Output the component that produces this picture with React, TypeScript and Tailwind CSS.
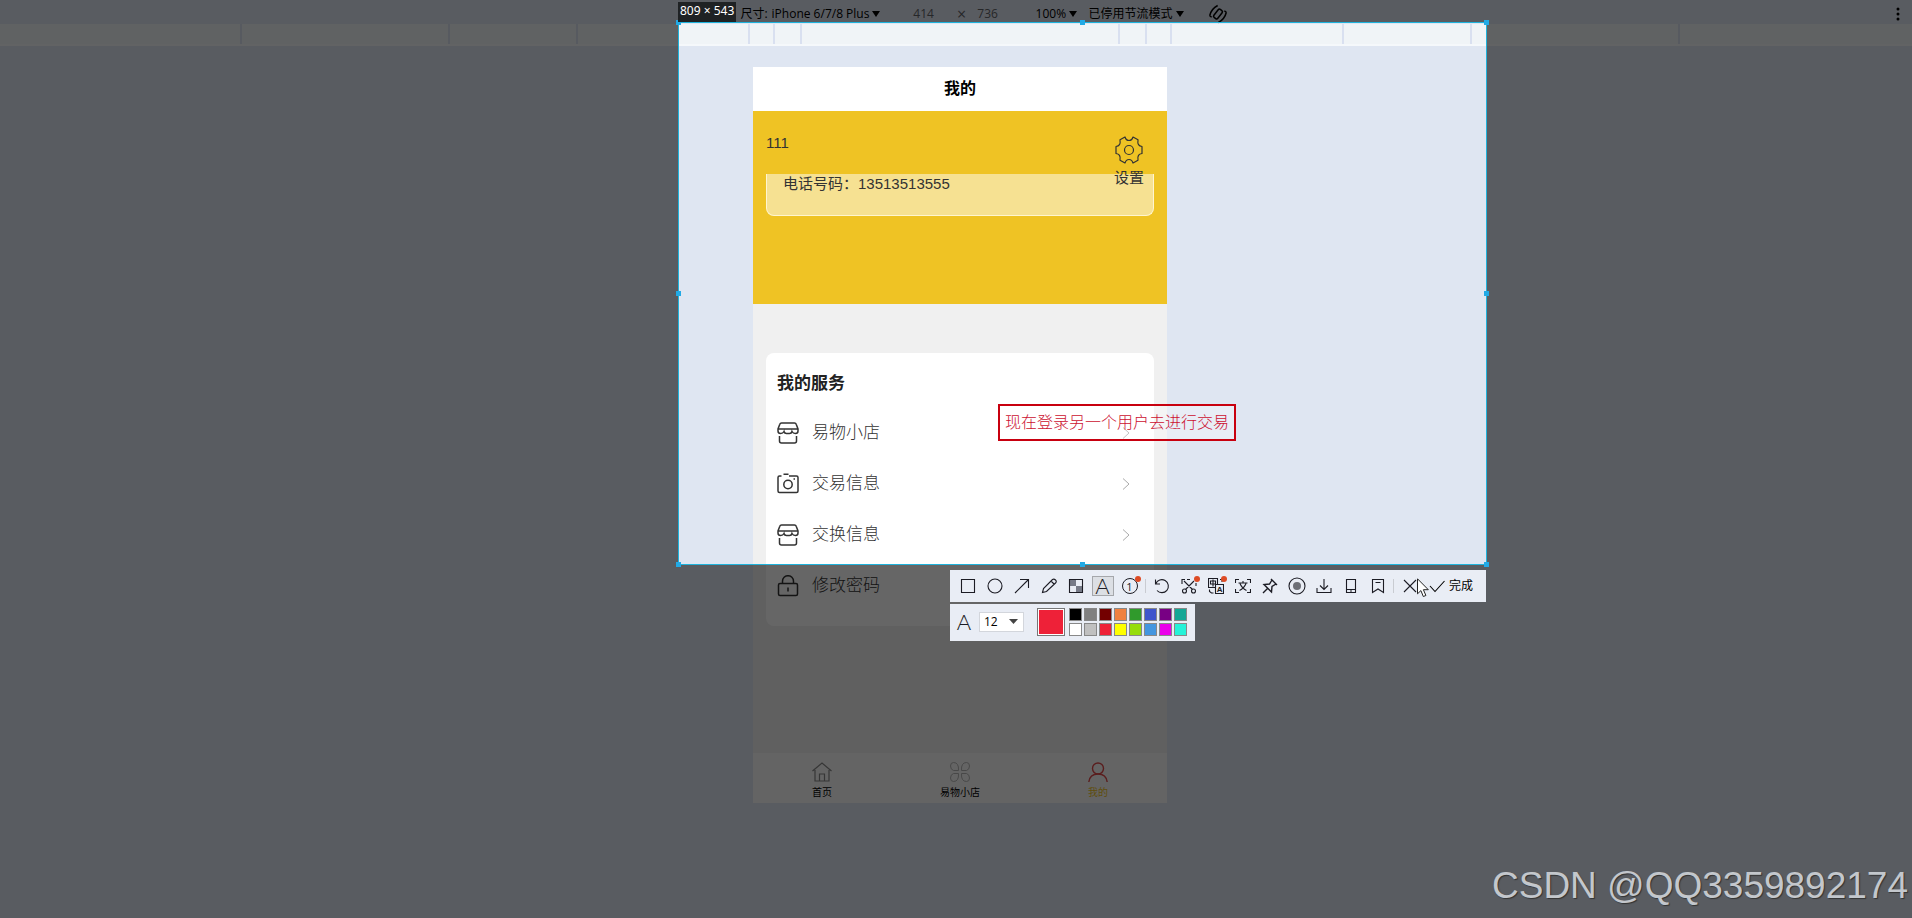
import type { ReactNode } from "react";

const swatches = [
  "bg-black", "bg-[#808080]", "bg-[#730000]", "bg-[#ef8140]", "bg-[#309a2c]", "bg-[#3f55cc]", "bg-[#780084]", "bg-[#15a795]",
  "bg-white", "bg-[#c0c0c0]", "bg-[#ee2138]", "bg-[#ffff00]", "bg-[#96dc0c]", "bg-[#4496df]", "bg-[#ea00ea]", "bg-[#26f2d8]",
];

const rulerLeft = ["w-[208px]", "w-[128px]", "w-[172px]", "w-[25px]", "w-[27px]"];
const rulerRight = ["w-[27px]", "w-[25px]", "w-[172px]", "w-[128px]", "w-[208px]"];

const Svg = ({ size = "size-4", box = "0 0 16 16", stroke = 1.1, children }: { size?: string; box?: string; stroke?: number; children: ReactNode }) => (
  <svg className={`${size} shrink-0`} viewBox={box} fill="none" stroke="currentColor" strokeWidth={stroke} aria-hidden="true">
    {children}
  </svg>
);

const ShopIcon = () => (
  <Svg size="size-[22px]" box="0 0 22 22" stroke={1.5}>
    <path d="M4.500 1h13q1.300 0 1.700 1.200L21 7v2q0 2.500-2.500 2.500T15 9.500q-.5 2-2.500 2h-3Q7.500 11.500 7 9.500q-1 2-3.500 2T1 9V7l1.800-4.800Q3.200 1 4.500 1ZM1 7h20M2.500 14v5q0 2 2 2h13q2 0 2-2v-5" />
  </Svg>
);

const CameraIcon = () => (
  <Svg size="size-[22px]" box="0 0 22 22" stroke={1.5}>
    <path d="M4.500 3H2.500Q1 3 1 4.500V18q0 1.500 1.500 1.500h17q1.500 0 1.500-1.500V4.500Q21 3 19.500 3H12M6.500 1.300h5M16.500 6H18" />
    <circle cx="11" cy="11.500" r="4.200" />
  </Svg>
);

const LockIcon = () => (
  <Svg size="size-[22px]" box="0 0 22 22" stroke={1.5}>
    <rect x="1.500" y="8.500" width="19" height="12" rx="1.500" />
    <path d="M5.500 8.500V6.200a5.500 5.500 0 0 1 11 0v2.300M11 12.500v4" />
  </Svg>
);

const services = [
  { name: "易物小店", icon: <ShopIcon /> },
  { name: "交易信息", icon: <CameraIcon /> },
  { name: "交换信息", icon: <ShopIcon /> },
  { name: "修改密码", icon: <LockIcon /> },
];

const Arrow = () => (
  <svg className="ml-0.5 h-1.5 w-2" viewBox="0 0 8 6" aria-hidden="true">
    <path d="M0 0h8L4 6z" fill="currentColor" />
  </svg>
);

const Ruler = () => (
  <div className="flex h-[22px] border-b-2 border-[#f5f8fb] bg-[#f0f4f7] pl-2">
    <div className="flex-1" />
    {rulerLeft.map((w, i) => (
      <div key={i} className={`${w} shrink-0 border-l-2 border-[#d9e0f0]`} />
    ))}
    <div className="w-[320px] shrink-0 border-x-2 border-[#d9e0f0]" />
    {rulerRight.map((w, i) => (
      <div key={i} className={`${w} shrink-0 border-r-2 border-[#d9e0f0]`} />
    ))}
    <div className="flex-1" />
  </div>
);

const DeviceBar = () => (
  <header className="flex h-6 items-center pt-[3px] font-['Open_Sans','Noto_Sans_CJK_SC',sans-serif] text-xs text-black">
    <div className="w-9 shrink-0" />
    <div className="flex flex-1 items-center justify-center pl-14">
      <label htmlFor="device">尺寸:</label>
      <select id="device" className="ml-1 appearance-none">
        <option>iPhone 6/7/8 Plus</option>
      </select>
      <Arrow />
      <input aria-label="宽度" defaultValue="414" className="ml-5 w-12 text-center text-[#5f6368]" />
      <span className="w-7 text-center text-base leading-4 text-[#5f6368]">×</span>
      <input aria-label="高度" defaultValue="736" className="w-6 text-center text-[#5f6368]" />
      <select aria-label="缩放" className="ml-9 appearance-none">
        <option>100%</option>
      </select>
      <Arrow />
      <select aria-label="节流" className="ml-3 appearance-none">
        <option>已停用节流模式</option>
      </select>
      <Arrow />
      <button aria-label="旋转" className="ml-6">
        <Svg size="size-5" box="0 0 20 20" stroke={1.5}>
          <g transform="rotate(38 10 10)">
            <rect x="7.500" y="5" width="5" height="10" rx="1.500" />
            <path d="M4.500 3.500q-3 6.500 0 13M15.500 3.500q3 6.500 0 13M4.500 16.500h2.500M13 3.500h2.500" />
          </g>
        </Svg>
      </button>
    </div>
    <button aria-label="更多选项" className="flex w-9 shrink-0 justify-center pl-2">
      <svg className="h-4 w-1" viewBox="0 0 4 16" aria-hidden="true">
        <circle cx="2" cy="3" r="1.500" />
        <circle cx="2" cy="8" r="1.500" />
        <circle cx="2" cy="13" r="1.500" />
      </svg>
    </button>
  </header>
);

const Phone = () => (
  <div className="flex h-[736px] flex-col bg-[#f0f0f0] text-[#333]">
    <h1 className="flex h-11 shrink-0 items-center justify-center bg-white text-base font-bold text-black">我的</h1>
    <section className="flex h-[193px] shrink-0 flex-col bg-[#efc324] px-[13px] pt-5 text-[15px] leading-6">
      <div className="relative flex h-[43px] items-start justify-between">
        <span>111</span>
        <button className="mr-[10px] mt-[5px] flex flex-col items-center gap-0.5">
          <Svg size="size-7" box="0 0 28 28" stroke={1.2}>
            <path d="M10 1q1 3.500 4 3.500T18 1l5 2.800q-1 6.200 4 6.700v7q-5 .5-4 6.700L18 27q-1-3.500-4-3.500T10 27l-5-2.800q1-6.200-4-6.700v-7q5-.5 4-6.700z" strokeLinejoin="round" />
            <circle cx="14" cy="14" r="4.500" />
          </Svg>
          <span>设置</span>
        </button>
      </div>
      <p className="h-[42px] rounded-b-lg border border-t-0 border-[#fff5cf] bg-[#f6e192] px-4 leading-5">电话号码：13513513555</p>
    </section>
    <section className="mx-[13px] mt-[49px] rounded-lg bg-white px-[11px] pt-[17px] pb-4">
      <h2 className="text-[17px] leading-7 font-bold text-[#222]">我的服务</h2>
      <ul className="pt-2">
        {services.map((item) => (
          <li key={item.name}>
            <a href="#" className="flex h-[51px] items-center pt-0.5 pr-[13px] text-[17px]">
              {item.icon}
              <span className="ml-[13px] flex-1 font-light text-[#333]">{item.name}</span>
              <svg className="h-3 w-2 text-[#aaa]" viewBox="0 0 8 12" fill="none" stroke="currentColor" aria-hidden="true">
                <path d="M1 .5 7 6 1 11.500" />
              </svg>
            </a>
          </li>
        ))}
      </ul>
    </section>
    <nav className="mt-auto flex h-[50px] shrink-0 bg-[#fafafa] pt-1 text-[10px] leading-3 text-black">
      <a href="#" className="flex flex-1 flex-col items-center justify-center gap-[5px]">
        <Svg size="size-5 text-[#888]" box="0 0 20 20" stroke={1.2}>
          <path d="M.5 9 10 1l9.500 8M3 8v11h14V8M7.500 19v-7h5v7" />
        </Svg>
        首页
      </a>
      <a href="#" className="flex flex-1 flex-col items-center justify-center gap-[5px]">
        <Svg size="size-5 text-[#b5b5b5]" box="0 0 20 20" stroke={1}>
          <path d="M8.500 8.500Q9 .5 3.500.5.500.5.500 4t3 4.500zM11.500 8.500Q11 .5 16.500.5q3 0 3 3.500t-3 4.500zM8.500 11.500q.5 8-5 8-3 0-3-3.500t3-4.500zM11.500 11.500q-.5 8 5 8 3 0 3-3.500t-3-4.500z" />
        </Svg>
        易物小店
      </a>
      <a href="#" className="flex flex-1 flex-col items-center justify-center gap-[5px] text-[#efc324]">
        <Svg size="size-5 text-[#e04a4a]" box="0 0 20 20" stroke={1.4}>
          <circle cx="10" cy="6.500" r="5.500" />
          <path d="M.8 20q1-8 9.200-8t9.200 8" />
        </Svg>
        我的
      </a>
    </nav>
  </div>
);

const Tool = ({ label, active, dot, children }: { label: string; active?: boolean; dot?: boolean; children: ReactNode }) => (
  <button aria-label={label} className="relative flex w-[27px] shrink-0 items-center justify-center">
    <span className={active ? "flex h-[20px] w-[22px] items-center justify-center border border-[#a5a7ab] bg-[#dcdfe4]" : "flex"}>{children}</span>
    {dot && <i className="absolute top-1.5 right-0.5 size-1.5 rounded-full bg-[#dd4b25]" />}
  </button>
);

const Divider = () => <span className="mx-0.5 h-3.5 w-px shrink-0 self-center bg-[#c9ccd2]" />;

const Toolbar = () => (
  <div className="absolute top-full right-0 mt-1.5 flex w-[536px] flex-col items-start gap-0.5 text-[#1c1c24]">
    <div className="flex h-8 w-full bg-[#e9edf5] pl-1">
      <Tool label="矩形"><Svg><path d="M1.500 1.500h13v13h-13z" /></Svg></Tool>
      <Tool label="椭圆"><Svg><circle cx="8" cy="8" r="7" /></Svg></Tool>
      <Tool label="箭头"><Svg><path d="M1 15 14.500 1.500M6 1.500h8.500V10" /></Svg></Tool>
      <Tool label="画笔"><Svg><path d="M1.500 14.500 2.500 10.500 11.500 1.500Q13 .5 14.500 2T14.500 5L5.500 13.500zM10 3l3 3" /></Svg></Tool>
      <Tool label="马赛克"><Svg><path d="M2 2h6v6H2zM8 8h6v6H8z" fill="#777b88" stroke="none" /><path d="M1.500 1.500h13v13h-13z" /></Svg></Tool>
      <Tool label="文字" active><span className="font-['Lato'] text-[22px] leading-5 font-light">A</span></Tool>
      <Tool label="序号" dot><span className="flex size-4 items-center justify-center rounded-full border border-current font-['Open_Sans'] text-[11px] leading-none">1</span></Tool>
      <Divider />
      <Tool label="撤销"><Svg><path d="M1.500 1.500V6H6M1.800 5.800A6.500 6.500 0 1 1 3 12.500" /></Svg></Tool>
      <Tool label="裁剪" dot><Svg><path d="M1 6V1.500h3M6 1.500h3M15 5v3M3 3l8.500 8.500M13 3l-8.500 8.500" /><circle cx="3.500" cy="13" r="2" /><circle cx="12.500" cy="13" r="2" /></Svg></Tool>
      <Tool label="翻译" dot>
        <Svg>
          <path d="M8 9.500H.5v-9h9V6M2.500 3h5v3h-5zM5 1.500v7M7.500 6.500h8v9h-8zM1.500 11.500v2l2 1.500h2M12 1.500h2v2.500" />
          <text x="8.800" y="14.200" fontSize="8" fontWeight="bold" fill="currentColor" stroke="none">A</text>
        </Svg>
      </Tool>
      <Tool label="识别文字"><Svg><path d="M.5 5V1.500H4M12 1.500h3.500V5M.5 11v3.500H4M12 14.500h3.500V11M3.500 5h9M8 3v2M5 5.500q2 5 6.500 7M11 5.500q-2 5-6.500 7" /></Svg></Tool>
      <Tool label="钉住"><Svg><path d="m9 1 6 6M10 2 7.500 6 2 6.500 9.500 14l.5-5.500L14 6M5.500 10.500 1 15" strokeWidth="1.400" /></Svg></Tool>
      <Tool label="录制"><Svg size="size-[18px]" box="0 0 18 18"><circle cx="9" cy="9" r="8" /><circle cx="9" cy="9" r="4" fill="#6d6f76" stroke="none" /></Svg></Tool>
      <Tool label="保存"><Svg><path d="M8 1v10M4 7.500l4 4 4-4M1 10v4.500h14V10" /></Svg></Tool>
      <Tool label="发送到手机"><Svg><path d="M3.500 1.500h9v13h-9zM3.500 11.500h9M7 13h2" /></Svg></Tool>
      <Tool label="收藏"><Svg><path d="M2.500 1.500h11v13L8 11l-5.500 3.500zM5.500 4.500h5" /></Svg></Tool>
      <Divider />
      <Tool label="取消"><Svg><path d="m2 2 12 12M14 2 2 14" /></Svg></Tool>
      <button className="flex flex-1 items-center gap-1 pl-1.5 text-xs text-black">
        <Svg><path d="m1 8 5 5.500L15.500 3" /></Svg>
        完成
      </button>
      <svg className="absolute top-2 right-[57px] h-5 w-3" viewBox="0 0 12 20" aria-hidden="true">
        <path d="M.5.800v15l3.400-3.200 2.400 5.900 2.600-1-2.500-5.800h4.900z" fill="#fff" stroke="#222" />
      </svg>
    </div>
    <div className="flex h-[37px] items-center bg-[#e9edf5] pr-2 pb-0.5 pl-[5px]">
      <span className="w-[18px] text-center font-['Lato'] text-[22px] leading-5 font-light">A</span>
      <div className="relative ml-1.5 flex items-center">
        <select aria-label="字号" className="h-5 w-[45px] appearance-none border border-[#d3d6dc] bg-white pl-1 font-['Open_Sans'] text-xs text-black">
          <option>12</option>
        </select>
        <span className="pointer-events-none absolute right-1.5 text-[#444]"><svg className="h-[5px] w-[9px]" viewBox="0 0 9 5" aria-hidden="true"><path d="M0 0h9L4.500 5z" fill="currentColor" /></svg></span>
      </div>
      <button aria-label="当前颜色" className="ml-[13px] size-7 border border-[#777] bg-white p-px">
        <span className="block size-full bg-[#ee2138]" />
      </button>
      <div className="ml-1 grid grid-cols-8 gap-0.5">
        {swatches.map((c) => (
          <button key={c} aria-label="颜色" className={`${c} size-[13px] border border-[#888]`} />
        ))}
      </div>
    </div>
  </div>
);

const handles = [
  "-top-[3px] -left-[3px]", "-top-[3px] left-1/2 -ml-[3px]", "-top-[3px] -right-[3px]",
  "top-1/2 -left-[3px] -mt-[3px]", "top-1/2 -right-[3px] -mt-[3px]",
  "-bottom-[3px] -left-[3px]", "-bottom-[3px] left-1/2 -ml-[3px]", "-bottom-[3px] -right-[3px]",
];

// the shadow dims everything outside of the selected area
const Selection = () => (
  <div className="absolute -top-[45px] -left-[75px] h-[543px] w-[809px] border border-[#1fb3dc] shadow-[0_0_0_2000px_rgba(0,0,0,0.6)]">
    {handles.map((h) => (
      <i key={h} className={`${h} absolute size-[5px] bg-[#22aae6]`} />
    ))}
    <div className="absolute bottom-full -left-px mb-px h-5 bg-[#1f2224] px-0.5 font-['Noto_Sans'] text-xs leading-[18px] whitespace-nowrap text-white">809 × 543</div>
    <p className="absolute top-[381px] left-[319px] border-2 border-[#c8000f] bg-white/30 px-[5px] pt-px text-base leading-8 font-light whitespace-nowrap text-[#cc1030]">现在登录另一个用户去进行交易</p>
    <Toolbar />
  </div>
);

const App = () => {
  return (
    <div className="relative min-h-screen overflow-hidden bg-[#dfe6f2] font-['Liberation_Sans','Noto_Sans_CJK_SC',sans-serif]">
      <DeviceBar />
      <Ruler />
      <main className="flex justify-center pt-[21px] pl-2">
        <div className="relative w-[414px] shrink-0">
          <Phone />
          <Selection />
        </div>
      </main>
      <div className="absolute right-1 bottom-2 font-['Liberation_Sans',sans-serif] text-[37px] leading-12 text-[#c3c7cc] [text-shadow:1px_1px_1px_#333]">CSDN @QQ3359892174</div>
    </div>
  );
};

export default App;
